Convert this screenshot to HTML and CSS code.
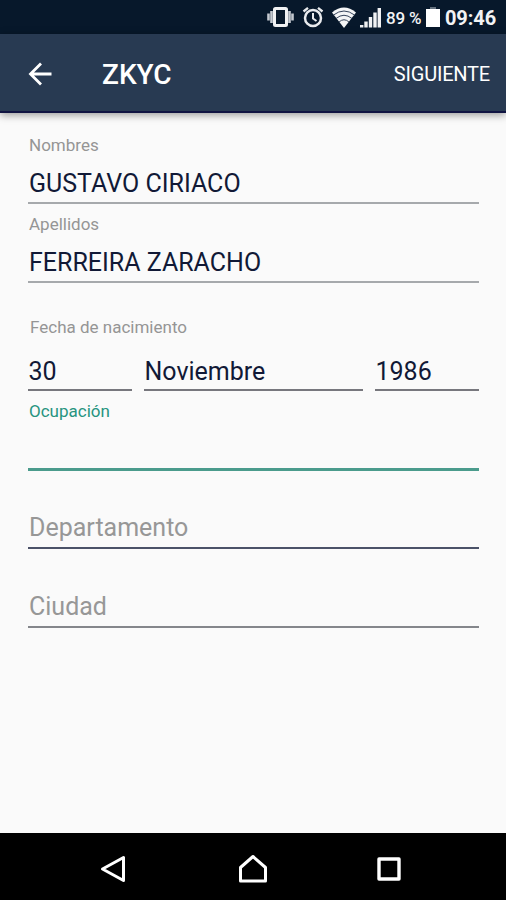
FILE: index.html
```
<!DOCTYPE html>
<html lang="es">
<head>
    <meta charset="UTF-8">
    <meta name="viewport" content="width=device-width, initial-scale=1.0">
    <title>ZKYC</title>
    <link rel="stylesheet" href="styles.css">
</head>
<body>

    <div class="status-bar">
        <svg class="icon-vibrate" width="27" height="22" viewBox="0 0 27 22">
            <path d="M1.500 7.500v7M4.500 5v12M22.500 5v12M25.500 7.500v7" stroke="#c3c9d0" stroke-width="2.600"/>
            <rect x="7.500" y="2.500" width="12" height="17" rx="1" fill="none" stroke="#f0f1f3" stroke-width="3"/>
        </svg>
        <svg class="icon-alarm" width="22" height="22" viewBox="0 0 22 22" fill="none" stroke="#e9ebee">
            <circle cx="11" cy="12" r="8" stroke-width="2.500"/>
            <path d="M1.500 5.500L6 1.800M20.500 5.500L16 1.800" stroke-width="2.300"/>
            <path d="M11 7v5.500l3.500 2.500" stroke-width="2"/>
        </svg>
        <svg class="icon-wifi" width="24" height="21" viewBox="0 0 24 21">
            <path d="M0 5.500Q12 -4.500 24 5.500L12 21z" fill="#f4f5f6"/>
            <path d="M1.500 8Q12 0 22.500 8M4 11.500Q12 5 20 11.500M7 15Q12 10.500 17 15" fill="none" stroke="#35435a" stroke-width="1"/>
        </svg>
        <svg class="icon-signal" width="21" height="21" viewBox="0 0 21 21" stroke="#f0f1f3" stroke-width="3.400">
            <path d="M1.700 18v2.500M6 14.500v6M10.500 10v10.500M15 5.500v15M19.300 1v19.500"/>
        </svg>
        <span class="battery-level">89 %</span>
        <svg class="icon-battery" width="14" height="20" viewBox="0 0 14 20">
            <path d="M0 2h14v18H0z" fill="#fff"/>
            <path d="M4 0h6v2H4z" fill="#65717e"/>
        </svg>
        <span class="clock">09:46</span>
    </div>

    <header class="toolbar">
        <svg class="back" width="24" height="24" viewBox="0 0 24 24" fill="none" stroke="#fff" stroke-width="2.800">
            <path d="M23.500 12H2.500M13 1.500L2.500 12L13 22.500"/>
        </svg>
        <h1>ZKYC</h1>
        <span class="next">SIGUIENTE</span>
    </header>

    <main class="form">
        <div class="field">
            <div class="label">Nombres</div>
            <div class="value">GUSTAVO CIRIACO</div>
        </div>
        <div class="field">
            <div class="label">Apellidos</div>
            <div class="value">FERREIRA ZARACHO</div>
        </div>

        <div class="birth">
            <div class="label">Fecha de nacimiento</div>
            <div class="date-row">
                <div class="value">30</div>
                <div class="value">Noviembre</div>
                <div class="value">1986</div>
            </div>
        </div>

        <div class="field active">
            <div class="label">Ocupación</div>
            <div class="value"></div>
        </div>

        <div class="value empty dark">Departamento</div>
        <div class="value empty">Ciudad</div>
    </main>

    <nav class="nav-bar">
        <svg width="28" height="30" viewBox="0 0 28 30" fill="none" stroke="#fff" stroke-width="3" stroke-linejoin="round">
            <path d="M24.500 3.500v23L3.500 15z"/>
        </svg>
        <svg width="30" height="30" viewBox="0 0 30 30" fill="none" stroke="#fff" stroke-width="3" stroke-linejoin="round">
            <path d="M2.500 13.500L15 2.500l12.500 11V27h-25z"/>
        </svg>
        <svg width="26" height="26" viewBox="0 0 26 26" fill="none" stroke="#fff" stroke-width="3.400" stroke-linejoin="round">
            <path d="M3 3h20v20H3z"/>
        </svg>
    </nav>

</body>
</html>
```
FILE: styles.css
```
* {
    margin: 0;
    padding: 0;
    box-sizing: border-box;
}

body {
    display: flex;
    flex-direction: column;
    height: 100vh;
    overflow: hidden;
    background-color: #fafafa;
    color: #111936;
    font-family: Roboto, sans-serif;
}

svg {
    display: block;
    flex: none;
}

.status-bar {
    display: flex;
    align-items: center;
    height: 34px;
    padding-left: 267px;
    background-color: #07182b;
    color: #f2f3f5;
    white-space: nowrap;
}

.icon-alarm {
    margin-left: 8px;
}

.icon-wifi {
    margin-left: 8px;
}

.icon-signal {
    margin-left: 4px;
}

.battery-level {
    width: 40px;
    margin-left: 5px;
    padding-top: 2px;
    font-size: 17px;
    font-weight: 500;
    letter-spacing: -0.2px;
}

.clock {
    margin-left: 5px;
    padding-top: 2px;
    font-size: 20px;
    font-weight: 700;
    letter-spacing: -0.1px;
}

.toolbar {
    position: relative;
    display: flex;
    align-items: center;
    height: 79px;
    padding: 3px 16px 0 28px;
    background-color: #283a52;
    border-bottom: 2px solid #101442;
    box-shadow: 0 2px 8px rgba(0, 0, 0, 0.4);
    color: #fff;
}

.toolbar h1 {
    margin-left: 50px;
    padding-top: 1px;
    font-size: 28px;
    font-weight: 500;
}

.next {
    margin-left: auto;
    font-size: 20px;
    letter-spacing: -0.2px;
}

.form {
    flex: 1;
    padding: 23px 27px 0 28px;
}

.field {
    margin-bottom: 11px;
}

.label {
    height: 20px;
    padding-left: 1px;
    font-size: 17px;
    line-height: 18px;
    color: #959595;
}

.value {
    height: 38px;
    padding-left: 1px;
    border-bottom: 2px solid #a6a9ac;
    font-size: 25px;
    line-height: 36px;
}

.field .value {
    margin-top: 10px;
}

/* fecha de nacimiento */
.birth {
    margin-top: 35px;
}

.birth .label {
    padding-left: 2px;
}

.date-row {
    display: grid;
    grid-template-columns: 104px 1fr 104px;
    column-gap: 12px;
    margin: 16px 0 11px;
}

.date-row .value {
    height: 37px;
    padding-left: 0.5px;
    border-bottom-color: #77777d;
}

/* campo con foco */
.active {
    margin-bottom: 39px;
}

.active .label {
    color: #27947f;
}

.active .value {
    height: 39px;
    border-bottom: 3px solid #4a9b8c;
}

.empty {
    height: 39px;
    margin-bottom: 40px;
    border-bottom-color: #84868b;
    color: #979797;
}

.dark {
    border-bottom-color: #4b5268;
}

.nav-bar {
    display: grid;
    grid-template-columns: 144px 1fr 136px;
    place-items: center;
    height: 67px;
    padding: 4px 49px 0 41px;
    background-color: #000;
}
```
